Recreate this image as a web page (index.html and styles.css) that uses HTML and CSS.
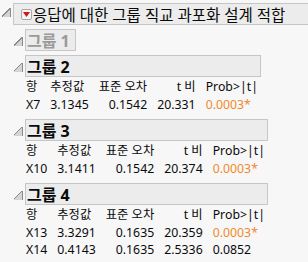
FILE: index.html
```html
<!DOCTYPE html>
<html lang="ko">
<head>
<meta charset="utf-8">
<link rel="stylesheet" href="styles.css">
</head>
<body>
<div class="node top">
  <span class="tri"></span>
  <div class="head head-top">
    <span class="redbtn"><svg width="7" height="5" viewBox="0 0 7 5"><path d="M0 0H7L3.5 5Z" fill="#d01818"/></svg></span>
    <span class="title-top">응답에 대한 그룹 직교 과포화 설계 적합</span>
  </div>
  <div class="children">
    <div class="node closed">
      <span class="tri"></span>
      <div class="head"><span class="gtitle">그룹 1</span></div>
    </div>
    <div class="node">
      <span class="tri"></span>
      <div class="group">
        <div class="head"><span class="gtitle">그룹 2</span></div>
        <table class="est">
          <tr><th class="l">항</th><th class="l">추정값</th><th class="r">표준 오차</th><th class="r">t 비</th><th class="l">Prob&gt;|t|</th></tr>
          <tr><td class="l">X7</td><td class="l">3.1345</td><td class="r">0.1542</td><td class="r">20.331</td><td class="l sig">0.0003*</td></tr>
        </table>
      </div>
    </div>
    <div class="node">
      <span class="tri"></span>
      <div class="group">
        <div class="head"><span class="gtitle">그룹 3</span></div>
        <table class="est">
          <tr><th class="l">항</th><th class="l">추정값</th><th class="r">표준 오차</th><th class="r">t 비</th><th class="l">Prob&gt;|t|</th></tr>
          <tr><td class="l">X10</td><td class="l">3.1411</td><td class="r">0.1542</td><td class="r">20.374</td><td class="l sig">0.0003*</td></tr>
        </table>
      </div>
    </div>
    <div class="node">
      <span class="tri"></span>
      <div class="group">
        <div class="head"><span class="gtitle">그룹 4</span></div>
        <table class="est">
          <tr><th class="l">항</th><th class="l">추정값</th><th class="r">표준 오차</th><th class="r">t 비</th><th class="l">Prob&gt;|t|</th></tr>
          <tr><td class="l">X13</td><td class="l">3.3291</td><td class="r">0.1635</td><td class="r">20.359</td><td class="l sig">0.0003*</td></tr>
          <tr><td class="l">X14</td><td class="l">0.4143</td><td class="r">0.1635</td><td class="r">2.5336</td><td class="l">0.0852</td></tr>
        </table>
      </div>
    </div>
  </div>
</div>
</body>
</html>
```

FILE: styles.css
```css
html, body {
  margin: 0;
  padding: 0;
  background: #f7f7f7;
  overflow: hidden;
}
body {
  width: 308px;
  height: 262px;
  font-family: "Noto Sans", "Noto Sans CJK KR", sans-serif;
  color: #0a0a0a;
}
.node {
  display: grid;
  grid-template-columns: 13px auto;
  align-items: start;
}
.node.top {
  padding-top: 3px;
  grid-template-columns: 13px 300px;
}
.children {
  grid-column: 2;
  display: flex;
  flex-direction: column;
  align-items: flex-start;
}
.children > .node {
  margin-top: 4px;
  margin-left: -1px;
}
.tri {
  grid-column: 1;
  width: 9px;
  height: 9px;
  margin: 5px 0 0 2px;
  background: linear-gradient(to bottom right, transparent 50%, #d4d4d4 50%);
  position: relative;
}
.tri::after {
  content: "";
  position: absolute;
  inset: 0;
  background: linear-gradient(to bottom right, transparent calc(50% - 1px), #8a8a8a calc(50% - 1px), #8a8a8a 50%, transparent 50%);
}
.tri::before {
  content: "";
  position: absolute;
  right: 0;
  top: 0;
  bottom: 0;
  width: 1px;
  background: #8a8a8a;
}
.top > .tri {
  margin: 5px 0 0 2px;
}
.children .tri {
  margin: 8px 0 0 2px;
}
.head {
  box-sizing: border-box;
  background: #ececec;
  border: 1px solid #c6c6c6;
  display: flex;
  align-items: center;
  height: 22px;
  padding: 0 4px 0 1px;
}
.head-top {
  padding-left: 7px;
}
.redbtn {
  box-sizing: border-box;
  width: 11px;
  height: 11px;
  border: 1px solid #a8a8a8;
  border-radius: 2px;
  background: #f4f4f4;
  display: flex;
  align-items: center;
  justify-content: center;
  margin-right: 1px;
}
.title-top {
  font-size: 15.5px;
  font-weight: 400;
  white-space: nowrap;
  color: #0a0a0a;
}
.gtitle {
  font-size: 16px;
  font-weight: 700;
  white-space: nowrap;
  color: #0a0a0a;
}
.closed .gtitle {
  color: #9a9a9a;
}
.closed .head {
  padding-right: 5px;
}
.group {
  display: flex;
  flex-direction: column;
  width: min-content;
}
.est {
  border-collapse: collapse;
  margin: 1px 0 2px -4px;
  font-size: 12.3px;
}
.est th, .est td {
  padding: 0 5px 0 5px;
  height: 17.5px;
  line-height: 17px;
  white-space: nowrap;
  font-weight: 400;
}
.est th:last-child, .est td:last-child {
  padding-right: 3px;
}
.est .l { text-align: left; }
.est .r { text-align: right; }
.est .sig { color: #f08a2c; }
```
